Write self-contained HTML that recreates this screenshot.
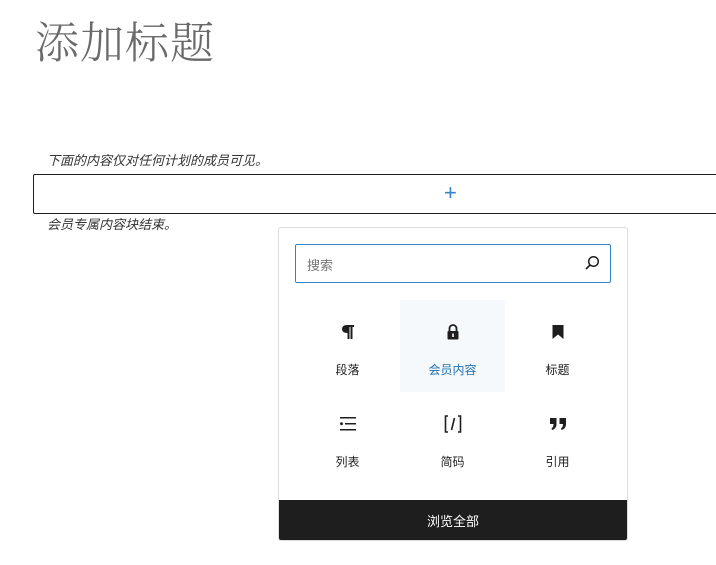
<!DOCTYPE html>
<html><head><meta charset="utf-8"><style>
body{margin:0;width:716px;height:565px;background:#fff;position:relative;overflow:hidden;font-family:"Liberation Sans","Noto Sans CJK SC",sans-serif;}
.abs{position:absolute}
.title{left:35px;top:10px;font-family:"Noto Serif CJK SC",serif;font-size:44px;color:#6a6a6a;letter-spacing:1px;line-height:58px;font-weight:300}
.note{font-size:13px;font-style:italic;color:#333;left:47px;line-height:16px}
.box{left:33px;top:174px;width:690px;height:38px;border:1px solid #1e1e1e;border-radius:2px}
.plus{left:444px;top:180px;font-size:22px;color:#3582c4;line-height:26px}
.pop{left:278px;top:227px;width:348px;height:312px;border:1px solid #ddd;border-radius:3px;background:#fff;overflow:hidden}
.search{left:16px;top:16px;width:314px;height:37px;border:1.5px solid #3582c4;border-radius:2px}
.search span{position:absolute;left:11px;top:10px;font-size:13px;color:#757575}
.cell{width:105px;height:92px;text-align:center}
.cell .ic{position:absolute;left:0;width:105px;top:20px;height:24px;display:flex;justify-content:center;align-items:center}
.cell .lb{position:absolute;left:0;width:105px;top:61px;font-size:12px;color:#1e1e1e}
.bar{left:0;top:272px;width:348px;height:40px;background:#1e1e1e;color:#fff;font-size:13px;text-align:center;line-height:44px}
</style></head><body>
<div class="abs title">添加标题</div>
<div class="abs note" style="top:153px">下面的内容仅对任何计划的成员可见。</div>
<div class="abs box"></div>
<div class="abs plus">+</div>
<div class="abs note" style="top:217px">会员专属内容块结束。</div>
<div class="abs pop">
 <div class="abs search"><span>搜索</span>
  <svg class="abs" style="left:288px;top:10px" width="16" height="16" viewBox="0 0 16 16"><circle cx="9.5" cy="6.5" r="4.8" fill="none" stroke="#1e1e1e" stroke-width="1.5"/><path d="M6 10L2 14" stroke="#1e1e1e" stroke-width="1.6"/></svg>
 </div>
 <div class="abs cell" style="left:16px;top:72px"><div class="ic"><svg width="14" height="16" viewBox="0 0 14 16"><path d="M6 1h7v2h-1.5v12h-2V3h-1v12h-2V9C3 9 1 7.5 1 5s2-4 5-4z" fill="#1e1e1e"/></svg></div><div class="lb">段落</div></div>
 <div class="abs cell" style="left:121px;top:72px;background:#f5f9fc"><div class="ic"><svg width="14" height="18" viewBox="0 0 14 18"><path d="M3.5 8V5.5a3.5 3.5 0 017 0V8" fill="none" stroke="#1e1e1e" stroke-width="1.8"/><rect x="1.5" y="8" width="11" height="8.5" rx="1" fill="#1e1e1e"/><rect x="6.2" y="10.5" width="1.6" height="3.5" fill="#fff"/></svg></div><div class="lb" style="color:#2271b1">会员内容</div></div>
 <div class="abs cell" style="left:226px;top:72px"><div class="ic"><svg width="14" height="16" viewBox="0 0 14 16"><path d="M1.5 1h11v14L7 10.5 1.5 15z" fill="#1e1e1e"/></svg></div><div class="lb">标题</div></div>
 <div class="abs cell" style="left:16px;top:164px"><div class="ic"><svg width="18" height="16" viewBox="0 0 18 16"><rect x="1" y="1" width="16" height="1.5" fill="#1e1e1e"/><rect x="1" y="13" width="16" height="1.5" fill="#1e1e1e"/><circle cx="2.5" cy="7.7" r="1.4" fill="#1e1e1e"/><rect x="6" y="7" width="11" height="1.5" fill="#1e1e1e"/></svg></div><div class="lb">列表</div></div>
 <div class="abs cell" style="left:121px;top:164px"><div class="ic"><svg width="18" height="18" viewBox="0 0 18 18"><path d="M4 1H1.5v16H4M14 1h2.5v16H14" fill="none" stroke="#1e1e1e" stroke-width="1.6"/><path d="M10.5 3L7.5 15" stroke="#1e1e1e" stroke-width="1.6"/></svg></div><div class="lb">简码</div></div>
 <div class="abs cell" style="left:226px;top:164px"><div class="ic"><svg width="18" height="14" viewBox="0 0 18 14"><path d="M1 1h6.5v6c0 3-1.5 5-4.5 6l-.5-1.5C4 10.5 4.5 9 4.5 7H1z M10.5 1H17v6c0 3-1.5 5-4.5 6l-.5-1.5c1.5-1 2-2.5 2-4.5h-3.5z" fill="#1e1e1e"/></svg></div><div class="lb">引用</div></div>
 <div class="abs bar">浏览全部</div>
</div>
</body></html>
